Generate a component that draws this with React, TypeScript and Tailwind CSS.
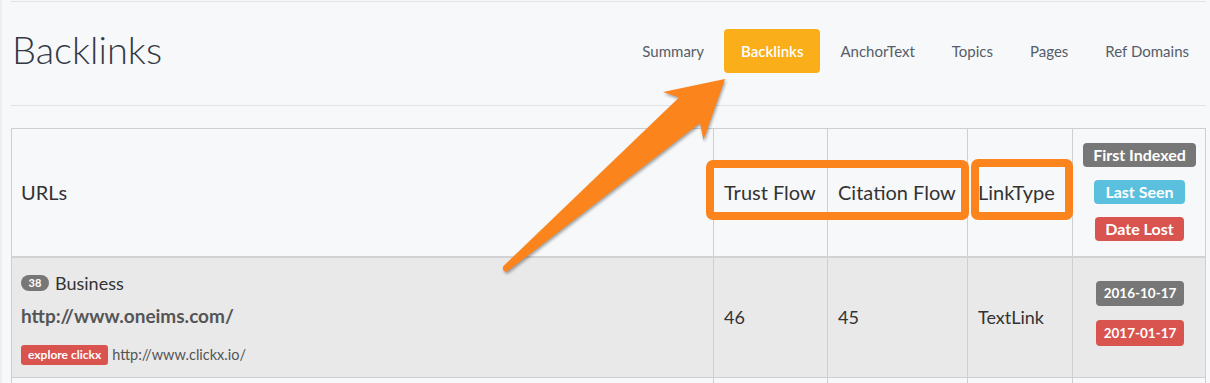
import React from "react";

const navItems = ["Summary", "Backlinks", "AnchorText", "Topics", "Pages", "Ref Domains"];

const Annotations = () => (
  <svg
    className="pointer-events-none absolute left-0 top-0"
    width={1210}
    height={383}
    viewBox="0 0 1210 383"
  >
    <path
      d="M723 79 L661 92 L677 97.5 L501.5 266 Q499.5 269.5 503 271.5 Q505 272 506.5 270.5 L698 123 L701.5 140 Z"
      fill="#fc841c"
      className="drop-shadow-[1px_2px_1.5px_rgba(0,0,0,0.35)]"
    />
    <rect x={708} y={164} width={255} height={52} rx={3} fill="none" stroke="#fc841c" strokeWidth={8} />
    <rect x={973} y={163} width={94} height={53} rx={3} fill="none" stroke="#fc841c" strokeWidth={8} />
  </svg>
);

const App = () => {
  return (
    <div className="relative h-[383px] w-[1210px] overflow-hidden border-l-2 border-l-[#eceef1] bg-[#f7f8fa] font-['Lato','Liberation_Sans',sans-serif] text-[#333]">
      <div className="ml-[9px] mt-[1px] w-[1195px] border-t border-[#e1e3e6]">
        {/* page header */}
        <div className="flex h-[104px] items-start justify-between border-b border-[#e1e3e6]">
          <h1 className="ml-[1px] mt-[28px] text-[38px] font-light leading-none text-[#333a44]">
            Backlinks
          </h1>
          <div className="mt-[27px] flex gap-[3px]">
            {navItems.map((item) => (
              <div
                key={item}
                className={
                  item === "Backlinks"
                    ? "flex h-[44px] items-center rounded-[4px] bg-[#f9ae1a] px-[17px] text-[15px] font-semibold text-white"
                    : "flex h-[44px] items-center px-[17px] text-[15px] text-[#555d68]"
                }
              >
                {item}
              </div>
            ))}
          </div>
        </div>

        {/* table */}
        <table className="mt-[22px] w-full table-fixed border-collapse border border-[#cfcfcf]">
          <colgroup>
            <col className="w-[702px]" />
            <col className="w-[114px]" />
            <col className="w-[140px]" />
            <col className="w-[105px]" />
            <col />
          </colgroup>
          <thead>
            <tr className="h-[128px] border-b-2 border-[#d2d2d2] bg-[#f7f8fa]">
              <th className="border-r border-[#cfcfcf] pl-[9px] pr-[10px] text-left align-middle text-[20px] font-normal">
                URLs
              </th>
              <th className="border-r border-[#cfcfcf] px-[10px] text-left align-middle text-[20px] font-normal whitespace-nowrap">
                Trust Flow
              </th>
              <th className="border-r border-[#cfcfcf] px-[10px] text-left align-middle text-[20px] font-normal whitespace-nowrap">
                Citation Flow
              </th>
              <th className="border-r border-[#cfcfcf] px-[10px] text-left align-middle text-[20px] font-normal">
                LinkType
              </th>
              <th className="align-middle font-normal">
                <div className="flex flex-col items-center gap-[13px] pl-[1px]">
                  <span className="rounded-[4px] bg-[#777] px-[10px] text-[16px] font-bold leading-[24px] text-white">
                    First Indexed
                  </span>
                  <span className="rounded-[4px] bg-[#5bc0de] px-[11px] text-[16px] font-bold leading-[24px] text-white">
                    Last Seen
                  </span>
                  <span className="rounded-[4px] bg-[#d9534f] px-[10px] text-[16px] font-bold leading-[24px] text-white">
                    Date Lost
                  </span>
                </div>
              </th>
            </tr>
          </thead>
          <tbody>
            <tr className="h-[121px] border-b border-[#cfcfcf] bg-[#e9e9e9]">
              <td className="border-r border-[#cfcfcf] pl-[9px] pr-[10px] pt-[5px] align-middle">
                <div className="flex h-[18px] items-center gap-[6px]">
                  <span className="flex h-[16px] w-[28px] items-center justify-center rounded-full bg-[#777] text-[11px] font-bold text-white">
                    38
                  </span>
                  <span className="text-[18px] leading-none">Business</span>
                </div>
                <div className="mt-[12px] text-[19px] font-bold leading-[24px] text-[#555]">
                  http://www.oneims.com/
                </div>
                <div className="mt-[16px] flex items-center gap-[4px]">
                  <span className="rounded-[3px] bg-[#d9534f] px-[7px] text-[12px] font-bold leading-[20px] text-white">
                    explore clickx
                  </span>
                  <span className="text-[14.5px] text-[#555]">http://www.clickx.io/</span>
                </div>
              </td>
              <td className="border-r border-[#cfcfcf] px-[10px] align-middle text-[18px]">46</td>
              <td className="border-r border-[#cfcfcf] px-[10px] align-middle text-[18px]">45</td>
              <td className="border-r border-[#cfcfcf] px-[10px] align-middle text-[18px]">TextLink</td>
              <td className="align-middle">
                <div className="flex flex-col items-center gap-[14px] pb-[8px] pl-[2px]">
                  <span className="rounded-[4px] bg-[#777] px-[8px] text-[13.5px] font-bold leading-[25px] text-white">
                    2016-10-17
                  </span>
                  <span className="rounded-[4px] bg-[#d9534f] px-[8px] text-[13.5px] font-bold leading-[26px] text-white">
                    2017-01-17
                  </span>
                </div>
              </td>
            </tr>
            <tr className="h-[121px] bg-[#f7f8fa]">
              <td className="border-r border-[#cfcfcf]" />
              <td className="border-r border-[#cfcfcf]" />
              <td className="border-r border-[#cfcfcf]" />
              <td className="border-r border-[#cfcfcf]" />
              <td />
            </tr>
          </tbody>
        </table>
      </div>
      <Annotations />
    </div>
  );
};

export default App;
